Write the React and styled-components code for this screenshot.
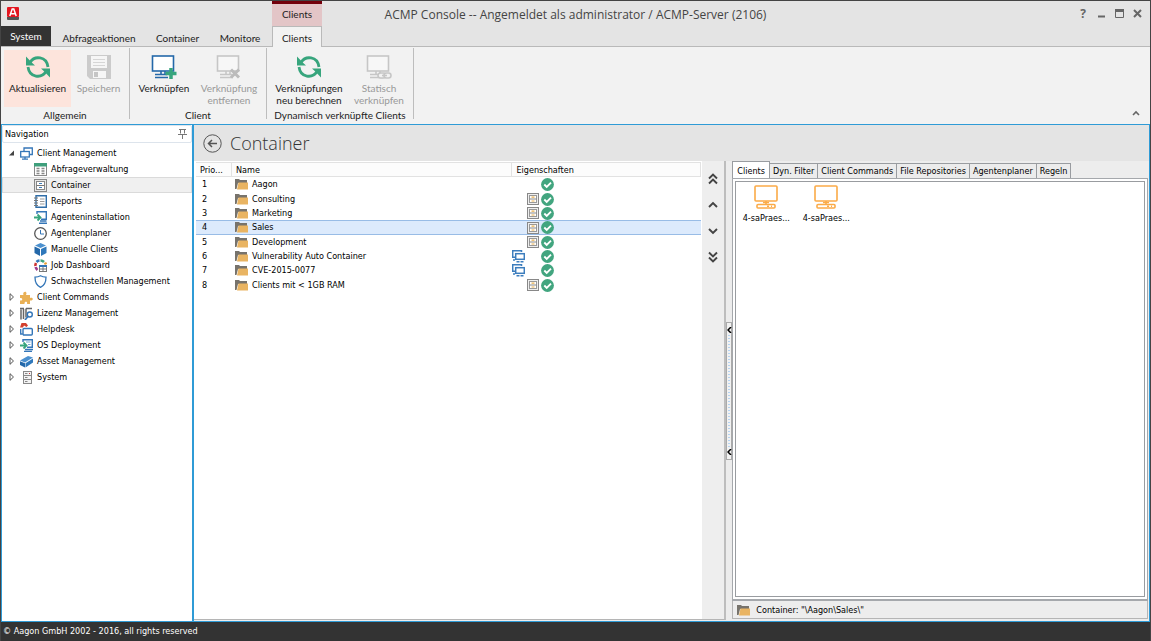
import React from "react";
import styled, { createGlobalStyle, css } from "styled-components";

const ui = `"Open Sans", "Noto Sans", sans-serif`;
const ribbonFont = `Lato, "Open Sans", sans-serif`;
const compact = `"DejaVu Sans Condensed", "Liberation Sans", sans-serif`;
const blue = "#2f9bd6";

const Global = createGlobalStyle`
  * { box-sizing: border-box; }
  html, body, #root { height: 100%; }
  body { margin: 0; background: #333; }
  button { margin: 0; padding: 0; border: 0; background: none; font: inherit; color: inherit; cursor: pointer; }
  svg { display: block; flex: none; }
`;

const Window = styled.div`
  display: flex;
  flex-direction: column;
  min-height: 100vh;
  border: 1px solid #444;
  border-bottom: 0;
  background: #333;
  color: #222;
  font: 10px/12px ${ribbonFont};
`;

/* Title bar */
const TitleBar = styled.header`
  display: grid;
  grid-template-columns: 1fr auto 1fr;
  grid-template-rows: 25px;
  background: #e4e4e4;
`;
const TitleLeft = styled.div`
  display: flex;
  align-items: center;
  justify-content: flex-start;
  padding-left: 6px;
`;
const ContextLabel = styled.div`
  width: 50px;
  height: 25px;
  margin-left: 253px;
  border-top: 3px solid #74000b;
  background: #e3c5c7;
  text-align: center;
  line-height: 21px;
`;
const Title = styled.h1`
  margin: 0;
  font: 400 12px/28px ${ui};
  color: #444;
`;
const WindowControls = styled.div`
  display: flex;
  align-items: center;
  justify-content: flex-end;
  gap: 6px;
  padding-right: 7px;
`;
const ControlButton = styled.button`
  display: grid;
  place-items: center;
  width: 12px;
  height: 12px;
  color: #666;
  font: 700 12px/12px ${ui};
`;

/* Ribbon */
const RibbonTabs = styled.div`
  display: flex;
  height: 21px;
  background: #e4e4e4;
  border-bottom: 1px solid #b9b9b9;
`;
const RibbonTab = styled.button`
  width: ${(p) => p.$width}px;
  height: 21px;
  line-height: 24px;
  text-align: center;
  ${(p) => p.$kind === "system" && css`
    height: 20px;
    line-height: 20px;
    background: #333;
    color: #fff;
  `}
  ${(p) => p.$kind === "active" && css`
    border: 1px solid #b9b9b9;
    border-bottom: 0;
    background: #f2f2f2;
    line-height: 22px;
  `}
`;
const Ribbon = styled.div`
  display: flex;
  height: 77px;
  padding: 1px 0 5px;
  background: #f2f2f2;
`;
const Group = styled.section`
  display: flex;
  flex-direction: column;
  padding: 2px 3px 0;
  border-right: 1px solid #bdbdbd;
`;
const GroupButtons = styled.div`
  display: flex;
  flex: none;
  height: 57px;
`;
const GroupName = styled.h2`
  flex: none;
  margin: 0;
  font: 400 10px/16px ${ribbonFont};
  text-align: center;
  white-space: nowrap;
`;
const RibbonButton = styled.button`
  display: flex;
  flex-direction: column;
  align-items: center;
  gap: 3px;
  width: ${(p) => p.$width}px;
  padding-top: 5px;
  background: ${(p) => (p.$hot ? "#fde4dc" : "transparent")};
  color: ${(p) => (p.disabled ? "#999" : "#222")};
  white-space: pre-line;
`;
const RibbonFill = styled.div`
  display: flex;
  flex: 1;
  align-items: flex-end;
  justify-content: flex-end;
  padding-right: 8px;
`;

/* Workspace */
const Workspace = styled.div`
  display: flex;
  flex: 1;
  min-height: 0;
  border: 1px solid ${blue};
  background: #ededed;
  font: 9px/12px ${compact};
  color: #000;
`;
const Sidebar = styled.nav`
  width: 192px;
  flex: none;
  border-right: 2px solid ${blue};
  background: #fff;
`;
const SidebarHead = styled.div`
  display: flex;
  align-items: center;
  justify-content: space-between;
  height: 18px;
  margin-bottom: 2px;
  padding: 0 4px 0 2px;
  border: 1px solid #dde4ec;
  border-radius: 2px;
`;
const Tree = styled.ul`
  margin: 0;
  padding: 0;
  list-style: none;
`;
const TreeLink = styled.a`
  display: flex;
  align-items: center;
  gap: 4px;
  height: 16px;
  padding-left: ${(p) => (p.$level ? 31 : 5)}px;
  border: 1px solid ${(p) => (p.$selected ? "#dadada" : "transparent")};
  background: ${(p) => (p.$selected ? "#f0f0f0" : "transparent")};
  color: #000;
  text-decoration: none;
  white-space: nowrap;
`;

const Content = styled.main`
  display: flex;
  flex: 1;
  flex-direction: column;
  min-width: 0;
`;
const PageHead = styled.div`
  display: flex;
  align-items: center;
  gap: 8px;
  height: 36px;
  padding-left: 9px;
  background: #e4e4e4;
`;
const PageTitle = styled.h2`
  margin: 0;
  font: 300 18px/36px ${ui};
  color: #333;
`;
const Panes = styled.div`
  display: flex;
  flex: 1;
  min-height: 0;
`;
const ListPane = styled.section`
  display: flex;
  flex: 532 1 0;
  min-width: 0;
  margin-bottom: 1px;
  border-right: 2px solid #bdbdbd;
  border-bottom: 1px solid #b5b5b5;
`;
const ListScroll = styled.div`
  flex: 1;
  min-width: 0;
  padding: 1px 1px 0 2px;
  background: #fff;
`;
const Grid = styled.table`
  width: 100%;
  height: 130px;
  table-layout: fixed;
  border-collapse: separate;
  border-spacing: 0;
`;
const HeadCell = styled.th`
  width: ${(p) => p.$width || "auto"};
  height: 15px;
  padding: 0 4px;
  border: solid #e2e2e2;
  border-width: 1px 1px 1px 0;
  background: #fcfcfc;
  font-weight: 400;
  text-align: left;
`;
const Cell = styled.td`
  padding: 0 0 0 ${(p) => (p.$lead ? 6 : 3)}px;
  line-height: 12px;
  border: solid ${(p) => (p.$selected ? "#98bce6" : "transparent")};
  border-width: 1px 0;
  background: ${(p) => (p.$selected ? "#dceafc" : "transparent")};
  white-space: nowrap;
`;
const NameBox = styled.span`
  display: flex;
  align-items: center;
  gap: 4px;
  height: 12px;
`;
const Flags = styled.span`
  display: grid;
  grid-template-columns: 13px 12px 13px;
  gap: 2px;
  width: 42px;
  height: 12px;
  margin-left: -3px;
  align-items: center;
`;
const Slot = styled.span`
  display: block;
`;
const Movers = styled.div`
  display: flex;
  flex-direction: column;
  align-items: center;
  gap: 12px;
  width: 22px;
  padding-top: 11px;
  background: #eee;
`;
const MoveButton = styled.button`
  display: grid;
  place-items: center;
  width: 14px;
  height: 14px;
  color: #444;
`;
const Splitter = styled.div`
  display: flex;
  flex-direction: column;
  justify-content: center;
  width: 6px;
  background: #ececec;
`;
const SplitHandle = styled.button`
  display: flex;
  flex-direction: column;
  align-items: center;
  gap: 2px;
  height: 138px;
  padding: 4px 0;
  border: 1px solid #aaa;
  background: #f2f2f2;
`;
const SplitDots = styled.span`
  flex: 1;
  width: 2px;
  background: repeating-linear-gradient(#b5d3f1 0 1px, #f2f2f2 1px 3px);
`;

const DetailPane = styled.section`
  display: flex;
  flex: 417 1 0;
  flex-direction: column;
  min-width: 0;
  padding: 0 1px 2px 0;
`;
const TabStrip = styled.div`
  display: flex;
  align-items: flex-end;
  height: 17px;
`;
const Tab = styled.button`
  height: ${(p) => (p.$active ? 18 : 15)}px;
  margin-bottom: ${(p) => (p.$active ? -1 : 0)}px;
  padding: 0 ${(p) => (p.$active ? 4 : 3)}px;
  border: 1px solid #999ca0;
  border-bottom: 0;
  border-left-width: ${(p) => (p.$active ? 1 : 0)}px;
  background: ${(p) => (p.$active ? "#fff" : "#ececec")};
  white-space: nowrap;
`;
const TabPage = styled.div`
  display: flex;
  flex: 1;
  padding: 2px;
  border: 1px solid #a5a8ac;
  border-bottom-width: 2px;
  background: #fff;
`;
const IconView = styled.div`
  display: flex;
  flex: 1;
  align-items: flex-start;
  border: 1px solid #999ca0;
`;
const ClientItem = styled.button`
  display: flex;
  flex-direction: column;
  align-items: center;
  gap: 3px;
  width: 60px;
  padding-top: 3px;
`;
const StatusLine = styled.div`
  display: flex;
  align-items: center;
  gap: 6px;
  height: 18px;
  padding-left: 4px;
  border: 1px solid #b5b5b5;
  border-top: 0;
`;
const Footer = styled.footer`
  height: 19px;
  padding-left: 2px;
  color: #fff;
  font: 9px/19px ${compact};
`;

/* Icons */
const AppLogo = () => (
  <svg width="12" height="13" viewBox="0 0 12 13">
    <rect width="12" height="10" rx="1" fill="#e3151f" />
    <path d="M0 10h12v2q0 1-1 1H1q-1 0-1-1z" fill="#555" />
    <path d="M2.800 9L5.200 2h1.600L9.200 9M4 6.800h4" fill="none" stroke="#fff" strokeWidth="1.500" />
  </svg>
);
const Refresh = () => (
  <svg width="26" height="24" viewBox="0 0 26 24" fill="none" stroke="#37a57d" strokeWidth="2.800">
    <path d="M5 7.500C9.500 .3 21.500 1 23 12" />
    <path d="M21 16.500C16.500 23.700 4.500 23 3 12" />
    <path d="M1 1.500V10.500h9L7 7.800z" fill="#37a57d" stroke="none" />
    <path d="M25 22.500V13.500h-9l3 2.700z" fill="#37a57d" stroke="none" />
  </svg>
);
const Floppy = () => (
  <svg width="24" height="24" viewBox="0 0 24 24">
    <path d="M0 0h24v24H3l-3-3z" fill="#cbcbcb" />
    <path d="M4 1h16v12H4zM6 16h13v7H6z" fill="#f6f6f6" />
    <path d="M6 4.500h12M6 7.500h12M6 10.500h12" stroke="#d6d6d6" />
    <path d="M7 17h4v5H7z" fill="#c5c5c5" />
  </svg>
);
const RibbonPc = ({ color, extra }) => (
  <svg width="26" height="24" viewBox="0 0 26 24" fill="none" stroke={color}>
    <rect x="1.500" y="1" width="21" height="15" fill={extra === "plus" ? "#fff" : "#f7f7f7"} strokeWidth="1.600" />
    <path d="M10 16v3M14 16v3M4 19.500h12M4 22.500h13" strokeWidth="1.600" />
    {extra === "plus" && <path d="M20 13v11M14.500 18.500h11" stroke="#37a57d" strokeWidth="3.500" />}
    {extra === "cross" && <path d="M15 14.500l8 8M23 14.500l-8 8" stroke="#bbb" strokeWidth="3" />}
    {extra === "link" && (
      <g strokeWidth="1.600" fill="#f2f2f2">
        <rect x="12" y="18" width="8" height="5" rx="2.500" />
        <rect x="18" y="18" width="7" height="5" rx="2.500" />
        <path d="M16 20.500h5" />
      </g>
    )}
  </svg>
);
const Pin = () => (
  <svg width="9" height="10" viewBox="0 0 9 10" fill="none" stroke="#777">
    <path d="M1 .5h7M2.500 .5v4M6.500 .5v4M0 5.500h9M4.500 5.500V10" />
  </svg>
);
const Expander = ({ open }) => (
  <svg width="8" height="8" viewBox="0 0 8 8">
    {open ? <path d="M6 1.500V6.500H1z" fill="#444" /> : <path d="M2 .7L5.500 4 2 7.300z" fill="#fff" stroke="#555" />}
  </svg>
);
const Folder = () => (
  <svg width="13" height="12" viewBox="0 0 13 12">
    <path d="M0 1h4l1 1h7v3H3L1.500 11H0z" fill="#77736c" />
    <path d="M3.500 4.500H13V11.500H2z" fill="#e9b462" />
  </svg>
);
const Cabinet = ({ drawer = "#e9b04d" }) => (
  <svg width="12" height="12" viewBox="0 0 12 12" fill="none">
    <rect x=".5" y=".5" width="11" height="11" fill="#eee" stroke="#888" />
    <rect x="2.500" y="2.500" width="7" height="7" fill="#fff" stroke="#999" />
    <path d="M2.500 6h7" stroke="#888" />
    <path d="M4.500 4.200h3M4.500 8h3" stroke={drawer} strokeWidth="1.200" />
  </svg>
);
const Check = () => (
  <svg width="13" height="13" viewBox="0 0 13 13">
    <circle cx="6.500" cy="6.500" r="6.400" fill="#42a57f" />
    <path d="M3.300 6.500l2.400 2.400 4.300-4.300" fill="none" stroke="#fff" strokeWidth="1.900" />
  </svg>
);
const Linked = () => (
  <svg width="13" height="13" viewBox="0 0 13 13" fill="none" stroke="#3c7dbd" strokeWidth="1.500">
    <path d="M9.500 2V.7H.7v6.600H3M1 10h2" />
    <rect x="3.700" y="3.700" width="8.600" height="5.600" fill="#fff" />
    <path d="M4.500 11.800h7" strokeWidth="1.600" strokeDasharray="3 1" />
  </svg>
);
const OrangePc = () => (
  <svg width="24" height="24" viewBox="0 0 24 24" fill="none" stroke="#fbab48" strokeWidth="1.600">
    <rect x="1" y="1" width="22" height="15" rx="1" />
    <path d="M12 16v3M9 17.500h6" />
    <rect x="3" y="19.500" width="18" height="3.500" rx="1" />
    <path d="M13 21.200h2M17 21.200h1" />
  </svg>
);
const Chevron = ({ down, double }) => (
  <svg width="10" height="12" viewBox="0 0 10 12" fill="none" stroke="currentColor" strokeWidth="1.900">
    <g transform={down ? "rotate(180 5 6)" : undefined}>
      {double ? <path d="M1 5.500l4-4 4 4M1 10.500l4-4 4 4" /> : <path d="M1 8l4-4 4 4" />}
    </g>
  </svg>
);
const Back = () => (
  <svg width="19" height="19" viewBox="0 0 19 19" fill="none" stroke="#555">
    <circle cx="9.500" cy="9.500" r="8.700" />
    <path d="M14 9.500H5.500M9 6L5.500 9.500 9 13" strokeWidth="1.500" />
  </svg>
);

const treeArt = {
  clients: (
    <g fill="none" stroke="#3476b8" strokeWidth="1.300">
      <path d="M4 4V1h8.300v6.500H10" />
      <rect x=".7" y="4.500" width="8.600" height="5.500" fill="#fff" />
      <path d="M5 10v2M2 12.200h6" />
    </g>
  ),
  query: (
    <g>
      <rect x=".5" y=".5" width="12" height="12" fill="#fff" stroke="#888" />
      <path d="M0 0h13v3.500H0z" fill="#3f9f7c" />
      <path d="M2.500 5.500H5.500M2.500 8H5.500M2.500 10.500H5.500M7.500 5.500h3M7.500 8h3M7.500 10.500h3" stroke="#888" strokeWidth="1.300" />
    </g>
  ),
  cabinet: (
    <g fill="none">
      <rect x=".5" y=".5" width="12" height="12" fill="#e8e8e8" stroke="#888" />
      <rect x="2.500" y="2.500" width="8" height="8" fill="#fff" stroke="#888" />
      <path d="M2.500 6.500h8" stroke="#777" />
      <path d="M5 4.500h3M5 8.500h3" stroke="#3c7dbd" strokeWidth="1.200" />
    </g>
  ),
  reports: (
    <g fill="none">
      <path d="M2 .7h10.300v11.600H2z" stroke="#2f6da8" strokeWidth="1.400" fill="#fff" />
      <path d="M0 3h4M0 5.500h4M0 8h4M0 10.500h4" stroke="#777" />
      <path d="M6 4h4.500M6 6.500h4.500M6 9h4.500" stroke="#999" />
    </g>
  ),
  agent: (
    <g fill="none">
      <path d="M3 3V.7h9.300v7.600H7M6 10h6.500M5 12.300h8" stroke="#3476b8" strokeWidth="1.400" />
      <path d="M0 6.500h6M3.500 3.500l3 3-3 3" stroke="#37a57d" strokeWidth="1.800" />
    </g>
  ),
  clock: (
    <g fill="none" stroke="#555">
      <circle cx="6.500" cy="6.500" r="5.800" strokeWidth="1.300" fill="#fff" />
      <path d="M6.500 3v4H10" stroke="#3476b8" />
    </g>
  ),
  cube: (
    <g>
      <path d="M6.500 0L12 2.500 6.500 5 1 2.500z" fill="#4b90cf" />
      <path d="M.5 3.500L6 6v7L.5 10z" fill="#2468a9" />
      <path d="M12.500 3.500L7 6v7l5.500-3z" fill="#2f78bb" />
    </g>
  ),
  dashboard: (
    <g fill="none" strokeWidth="2.600">
      <path d="M6.500 1.500A5 5 0 0 1 10 3" stroke="#3fa57e" />
      <path d="M2.500 3A5 5 0 0 1 5.500 1.500" stroke="#3476b8" />
      <path d="M1.500 7A5 5 0 0 1 2 4" stroke="#c33" />
      <path d="M3.500 11A5 5 0 0 1 1.700 8" stroke="#a03a8c" />
      <path d="M11 3.500l1 2" stroke="#e9a23b" />
      <rect x="5.500" y="6.500" width="7" height="6" fill="#fff" stroke="#777" strokeWidth="1" />
      <path d="M5 7h8" stroke="#3476b8" strokeWidth="2" />
      <path d="M5.500 10h7M9 8v4.500" stroke="#777" strokeWidth="1" />
    </g>
  ),
  shield: <path d="M6.500 .8C8.500 2 10 2.200 12 2.200 12 7.500 10.500 10.500 6.500 12.300 2.500 10.500 1 7.500 1 2.200 3 2.200 4.500 2 6.500 .8z" fill="#fff" stroke="#3476b8" strokeWidth="1.300" />,
  puzzle: <path d="M0 4h3.500C2 1 6.500-.5 6.500 2.500L6 4h4v3c3.500-1.500 4 3 0 2.500V13H7c1-3-3-3-2.500 0H0V9.500c3 .5 3-3 0-2.500z" fill="#e9b055" />,
  license: (
    <g fill="none">
      <path d="M1 2.500v10M3.500 2v10M6 1.500H12M6 1.500v9M0 1.500h4" stroke="#666" strokeWidth="1.500" />
      <circle cx="9.800" cy="7.500" r="2.500" stroke="#3476b8" strokeWidth="1.400" fill="#fff" />
      <path d="M8 9.500l-3 3.500" stroke="#3476b8" strokeWidth="1.600" />
    </g>
  ),
  helpdesk: (
    <g fill="none">
      <path d="M0 4.500L1.500 0H6l2 2.500L6.500 4 4 2.500 3 4.500z" fill="#d3402e" />
      <rect x="3" y="5.500" width="9.300" height="6.500" rx="1" stroke="#3476b8" strokeWidth="1.400" fill="#fff" />
      <path d="M.7 6v5h2" stroke="#3476b8" strokeWidth="1.300" />
    </g>
  ),
  deploy: (
    <g fill="none">
      <path d="M3 3V.7h9.300v7.600H7M5 10.500h8M4 12.500h8" stroke="#3476b8" strokeWidth="1.400" />
      <path d="M6 3h4.500M8 5.500h2.500" stroke="#78a7d4" strokeWidth="1.200" />
      <path d="M0 6.500h6M3.500 3.500l3 3-3 3" stroke="#37a57d" strokeWidth="1.800" />
    </g>
  ),
  asset: (
    <g>
      <path d="M0 5.500L8 1l5 1.500-8 5z" fill="#4b90cf" />
      <path d="M0 6.300L5 8.300V12.500L0 10z" fill="#2468a9" />
      <path d="M5.500 8.300L13 3.500v4L5.500 12.500z" fill="#2f78bb" />
    </g>
  ),
  server: (
    <g fill="none" stroke="#888">
      <rect x="3.500" y=".5" width="8" height="12" fill="#f3f3f3" />
      <path d="M3.500 4.500h8M3.500 8.500h8M5 2.500h2.500M5 6.500h2.500M5 10.500h2.500" />
      <path d="M9 2.500h1" stroke="#c33" />
    </g>
  ),
};
const TreeIcon = ({ name }) => (
  <svg width="13" height="13" viewBox="0 0 13 13">{treeArt[name]}</svg>
);

const tree = [
  { label: "Client Management", icon: "clients", open: true },
  { label: "Abfrageverwaltung", icon: "query", level: 1 },
  { label: "Container", icon: "cabinet", level: 1, selected: true },
  { label: "Reports", icon: "reports", level: 1 },
  { label: "Agenteninstallation", icon: "agent", level: 1 },
  { label: "Agentenplaner", icon: "clock", level: 1 },
  { label: "Manuelle Clients", icon: "cube", level: 1 },
  { label: "Job Dashboard", icon: "dashboard", level: 1 },
  { label: "Schwachstellen Management", icon: "shield", level: 1 },
  { label: "Client Commands", icon: "puzzle" },
  { label: "Lizenz Management", icon: "license" },
  { label: "Helpdesk", icon: "helpdesk" },
  { label: "OS Deployment", icon: "deploy" },
  { label: "Asset Management", icon: "asset" },
  { label: "System", icon: "server" },
];

const groups = [
  {
    name: "Allgemein",
    buttons: [
      { label: "Aktualisieren", icon: <Refresh />, width: 67, hot: true },
      { label: "Speichern", icon: <Floppy />, width: 55, disabled: true },
    ],
  },
  {
    name: "Client",
    buttons: [
      { label: "Verknüpfen", icon: <RibbonPc color="#2468a9" extra="plus" />, width: 62 },
      { label: "Verknüpfung\nentfernen", icon: <RibbonPc color="#c6c6c6" extra="cross" />, width: 68, disabled: true },
    ],
  },
  {
    name: "Dynamisch verknüpfte Clients",
    buttons: [
      { label: "Verknüpfungen\nneu berechnen", icon: <Refresh />, width: 78 },
      { label: "Statisch\nverknüpfen", icon: <RibbonPc color="#c6c6c6" extra="link" />, width: 62, disabled: true },
    ],
  },
];

const containers = [
  { name: "Aagon" },
  { name: "Consulting", cabinet: true },
  { name: "Marketing", cabinet: true },
  { name: "Sales", cabinet: true, selected: true },
  { name: "Development", cabinet: true },
  { name: "Vulnerability Auto Container", linked: true },
  { name: "CVE-2015-0077", linked: true },
  { name: "Clients mit < 1GB RAM", cabinet: true },
];

const detailTabs = ["Clients", "Dyn. Filter", "Client Commands", "File Repositories", "Agentenplaner", "Regeln"];

export default function App() {
  return (
    <Window>
      <Global />
      <TitleBar>
        <TitleLeft>
          <AppLogo />
          <ContextLabel>Clients</ContextLabel>
        </TitleLeft>
        <Title>ACMP Console -- Angemeldet als administrator / ACMP-Server (2106)</Title>
        <WindowControls>
          <ControlButton aria-label="Hilfe">?</ControlButton>
          <ControlButton aria-label="Minimieren">
            <svg width="9" height="9"><path d="M1 7.500h7" stroke="currentColor" strokeWidth="2" /></svg>
          </ControlButton>
          <ControlButton aria-label="Maximieren">
            <svg width="9" height="9"><path d="M.5 1v7.500h8V1" fill="none" stroke="currentColor" /><path d="M0 1.500h9" stroke="currentColor" strokeWidth="3" /></svg>
          </ControlButton>
          <ControlButton aria-label="Schließen">
            <svg width="9" height="9"><path d="M1 1l7 7M8 1L1 8" stroke="currentColor" strokeWidth="2" /></svg>
          </ControlButton>
        </WindowControls>
      </TitleBar>

      <RibbonTabs>
        <RibbonTab $width={50} $kind="system">System</RibbonTab>
        <RibbonTab $width={96}>Abfrageaktionen</RibbonTab>
        <RibbonTab $width={61}>Container</RibbonTab>
        <RibbonTab $width={64}>Monitore</RibbonTab>
        <RibbonTab $width={50} $kind="active">Clients</RibbonTab>
      </RibbonTabs>

      <Ribbon>
        {groups.map((g) => (
          <Group key={g.name}>
            <GroupButtons>
              {g.buttons.map((b) => (
                <RibbonButton key={b.label} $width={b.width} $hot={b.hot} disabled={b.disabled}>
                  {b.icon}
                  <span>{b.label}</span>
                </RibbonButton>
              ))}
            </GroupButtons>
            <GroupName>{g.name}</GroupName>
          </Group>
        ))}
        <RibbonFill>
          <ControlButton aria-label="Menüband reduzieren">
            <svg width="8" height="6"><path d="M1 5l3-3 3 3" fill="none" stroke="currentColor" strokeWidth="1.600" /></svg>
          </ControlButton>
        </RibbonFill>
      </Ribbon>

      <Workspace>
        <Sidebar>
          <SidebarHead>
            <span>Navigation</span>
            <button aria-label="Navigation anheften"><Pin /></button>
          </SidebarHead>
          <Tree>
            {tree.map((n) => (
              <li key={n.label}>
                <TreeLink href="#" $level={n.level} $selected={n.selected}>
                  {!n.level && <Expander open={n.open} />}
                  <TreeIcon name={n.icon} />
                  <span>{n.label}</span>
                </TreeLink>
              </li>
            ))}
          </Tree>
        </Sidebar>

        <Content>
          <PageHead>
            <button aria-label="Zurück"><Back /></button>
            <PageTitle>Container</PageTitle>
          </PageHead>
          <Panes>
            <ListPane>
              <ListScroll>
                <Grid>
                  <thead>
                    <tr>
                      <HeadCell $width="36px">Prio...</HeadCell>
                      <HeadCell $width="55.5%">Name</HeadCell>
                      <HeadCell>Eigenschaften</HeadCell>
                    </tr>
                  </thead>
                  <tbody>
                    {containers.map((c, i) => (
                      <tr key={c.name}>
                        <Cell $lead $selected={c.selected}>{i + 1}</Cell>
                        <Cell $selected={c.selected}>
                          <NameBox><Folder /><span>{c.name}</span></NameBox>
                        </Cell>
                        <Cell $selected={c.selected}>
                          <Flags>
                            <Slot>{c.linked && <Linked />}</Slot>
                            <Slot>{c.cabinet && <Cabinet />}</Slot>
                            <Slot><Check /></Slot>
                          </Flags>
                        </Cell>
                      </tr>
                    ))}
                  </tbody>
                </Grid>
              </ListScroll>
              <Movers>
                <MoveButton aria-label="Ganz nach oben"><Chevron double /></MoveButton>
                <MoveButton aria-label="Nach oben"><Chevron /></MoveButton>
                <MoveButton aria-label="Nach unten"><Chevron down /></MoveButton>
                <MoveButton aria-label="Ganz nach unten"><Chevron double down /></MoveButton>
              </Movers>
            </ListPane>
            <Splitter>
              <SplitHandle aria-label="Bereich einklappen">
                <svg width="5" height="6"><path d="M4 0L1 3l3 3" fill="none" stroke="#000" strokeWidth="1.500" /></svg>
                <SplitDots />
                <svg width="5" height="6"><path d="M4 0L1 3l3 3" fill="none" stroke="#000" strokeWidth="1.500" /></svg>
              </SplitHandle>
            </Splitter>
            <DetailPane>
              <TabStrip>
                {detailTabs.map((t, i) => (
                  <Tab key={t} $active={i === 0}>{t}</Tab>
                ))}
              </TabStrip>
              <TabPage>
                <IconView>
                  <ClientItem><OrangePc /><span>4-saPraes...</span></ClientItem>
                  <ClientItem><OrangePc /><span>4-saPraes...</span></ClientItem>
                </IconView>
              </TabPage>
              <StatusLine>
                <Folder />
                <span>Container: "\Aagon\Sales\"</span>
              </StatusLine>
            </DetailPane>
          </Panes>
        </Content>
      </Workspace>
      <Footer>© Aagon GmbH 2002 - 2016, all rights reserved</Footer>
    </Window>
  );
}
